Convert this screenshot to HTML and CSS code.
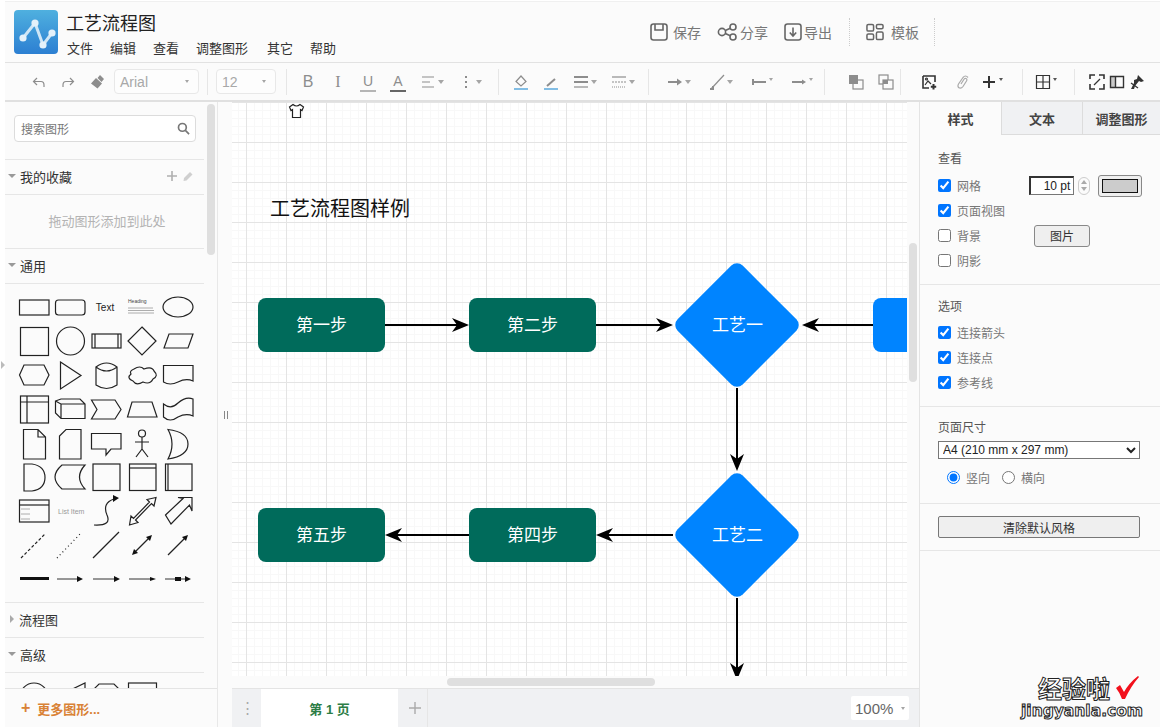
FILE: index.html
```html
<!DOCTYPE html>
<html lang="zh-CN">
<head>
    <meta charset="UTF-8">
    <title>工艺流程图</title>
    <link rel="stylesheet" href="styles.css">
</head>
<body>

<i class="collapse-tri"></i>

<div class="app">

    <!-- Top header -->
    <header class="header">
        <div class="brand">
            <svg class="logo" viewBox="0 0 44 44">
                <defs>
                    <linearGradient id="logoFill" x1="0" y1="0" x2="0" y2="1">
                        <stop offset="0" stop-color="#4fb0df"/>
                        <stop offset="1" stop-color="#2c7fd2"/>
                    </linearGradient>
                </defs>
                <rect width="44" height="44" rx="4" fill="url(#logoFill)"/>
                <path d="M9 28 L21 13 L29 35 L38 23" fill="none" stroke="#cfe6f6" stroke-width="3"/>
                <circle cx="9" cy="28" r="3.6" fill="#e4f1fa"/>
                <circle cx="21" cy="13" r="3.6" fill="#e4f1fa"/>
                <circle cx="29" cy="35" r="3.6" fill="#e4f1fa"/>
                <circle cx="38" cy="23" r="3.6" fill="#e4f1fa"/>
            </svg>
            <div>
                <div class="doc-title">工艺流程图</div>
                <nav class="menu">
                    <span>文件</span><span>编辑</span><span>查看</span><span class="menu-long">调整图形</span><span>其它</span><span>帮助</span>
                </nav>
            </div>
        </div>
        <div class="actions">
            <span class="action">
                <svg class="act-ico" viewBox="0 0 18 18"><rect x="1" y="1" width="16" height="16" rx="2.5"/><path d="M5 1 V7 H13 V1"/></svg>保存
            </span>
            <span class="action">
                <svg class="act-ico wide" viewBox="0 0 21 18"><circle cx="5" cy="9" r="3.6"/><circle cx="16" cy="4" r="3"/><circle cx="16" cy="14" r="3"/><path d="M8.3 7.5 L13.3 5.2 M8.3 10.5 L13.3 12.8"/></svg><span class="tight">分享</span>
            </span>
            <span class="action">
                <svg class="act-ico" viewBox="0 0 18 18"><rect x="1" y="1" width="16" height="16" rx="2.5"/><path d="M9 4.5 V12.5 M5.8 9.5 L9 13 L12.2 9.5"/></svg><span class="tight">导出</span>
            </span>
            <span class="dotted"></span>
            <span class="action action-last">
                <svg class="act-ico" viewBox="0 0 19 18"><rect x="1" y="1" width="7" height="7" rx="1.5"/><rect x="11" y="1" width="7" height="4.5" rx="1.5"/><rect x="1" y="11" width="7" height="6" rx="1.5"/><rect x="11" y="9" width="7" height="8" rx="1.5"/></svg>模板
            </span>
            <span class="dotted"></span>
        </div>
    </header>

    <!-- Format toolbar -->
    <div class="toolbar">
        <div class="group g-history">
            <svg class="ico" viewBox="0 0 16 16"><path d="M6 4 L2.5 7.5 L6 11 M3 7.5 H10 Q13 7.5 13 11 V13"/></svg>
            <svg class="ico" viewBox="0 0 16 16"><path d="M10 4 L13.5 7.5 L10 11 M13 7.5 H6 Q3 7.5 3 11 V13"/></svg>
            <svg class="ico" viewBox="0 0 16 16"><path class="solid" d="M7 4 L13 9.5 L8.5 14.5 L2 9.5 Z M8.5 4 L11 1 L15 5 L12.5 8 Z"/></svg>
        </div>
        <div class="combo combo-font">Arial<i class="caret small"></i></div>
        <span class="sep"></span>
        <div class="combo combo-size">12<i class="caret small"></i></div>
        <span class="sep"></span>
        <div class="group g-font">
            <span class="glyph">B</span>
            <span class="glyph serif">I</span>
            <span class="glyph under">U</span>
            <span class="glyph under dark">A</span>
            <span class="drop">
                <svg class="ico" viewBox="0 0 16 16"><path d="M2 3 H14 M2 8 H10 M2 13 H14"/></svg><i class="caret"></i>
            </span>
            <span class="drop">
                <svg class="ico" viewBox="0 0 16 16"><path class="solid" d="M7 2 H9 V4 H7 Z M7 7 H9 V9 H7 Z M7 12 H9 V14 H7 Z"/></svg><i class="caret"></i>
            </span>
        </div>
        <span class="sep"></span>
        <div class="group g-paint">
            <svg class="ico" viewBox="0 0 16 16"><path d="M8 2 L13 7.5 L8 12 L3 7.5 Z"/><path class="blue" d="M1 15 H15"/></svg>
            <svg class="ico" viewBox="0 0 16 16"><path class="thick" d="M4 12 L12 5"/><path class="blue" d="M1 15 H15"/></svg>
            <span class="drop">
                <svg class="ico" viewBox="0 0 16 16"><path class="thick" d="M1 3 H15"/><path class="thick" d="M1 8 H15"/><path d="M1 13 H15"/></svg><i class="caret"></i>
            </span>
            <span class="drop">
                <svg class="ico" viewBox="0 0 16 16"><path d="M1 3 H15"/><path d="M1 8 H15" stroke-dasharray="2 1"/><path d="M1 13 H15" stroke-dasharray="1 1"/></svg><i class="caret"></i>
            </span>
        </div>
        <span class="sep"></span>
        <div class="group g-lines">
            <span class="drop">
                <svg class="ico" viewBox="0 0 16 16"><path class="thick" d="M1 8 H11"/><path class="solid" d="M10 4.5 L15 8 L10 11.5 Z"/></svg><i class="caret"></i>
            </span>
            <span class="drop">
                <svg class="ico" viewBox="0 0 16 16"><path d="M2 15 L15 1"/><path class="thick" d="M1 15 H4 V12"/></svg><i class="caret"></i>
            </span>
            <span class="drop">
                <svg class="ico" viewBox="0 0 16 16"><path class="thick" d="M2 8 H15 M2 5 V11"/></svg><i class="caret small"></i>
            </span>
            <span class="drop">
                <svg class="ico" viewBox="0 0 16 16"><path class="thick" d="M1 8 H12"/><path class="solid" d="M11 5.5 L15 8 L11 10.5 Z"/></svg><i class="caret small"></i>
            </span>
        </div>
        <span class="sep"></span>
        <div class="group g-order">
            <svg class="ico" viewBox="0 0 16 16"><rect class="box" x="5" y="6" width="10" height="9"/><rect class="solid" x="1" y="1" width="9" height="9"/></svg>
            <svg class="ico" viewBox="0 0 16 16"><rect class="box" x="1" y="1" width="9" height="9"/><rect class="box" x="5" y="6" width="10" height="9"/><rect class="solid" x="5" y="6" width="5" height="4"/></svg>
        </div>
        <span class="sep"></span>
        <div class="group g-insert">
            <svg class="ico dark" viewBox="0 0 16 16"><path d="M2 2 H14 V8 M2 2 V14 H8" stroke-width="1.6"/><path d="M4 11 L7 7 L10 10"/><circle cx="5.5" cy="5" r="1"/><path class="thick" d="M12.500 10 V15.500 M9.800 12.800 H15.200"/></svg>
            <svg class="ico clip" viewBox="0 0 16 16"><path d="M13 3.5 Q10.5 .5 8 3.5 L3.5 10 Q2 13 4.5 14 Q6.5 14.5 8 12.5 L11.5 7 Q12.5 5 11 4.5 Q9.5 4 8.5 6 L6 10"/></svg>
            <span class="drop">
                <svg class="ico dark" viewBox="0 0 16 16"><path class="thick" d="M8 2 V14 M2 8 H14"/></svg><i class="caret small dark"></i>
            </span>
        </div>
        <span class="sep"></span>
        <span class="drop t-table">
            <svg class="ico dark" viewBox="0 0 16 16"><path d="M1.5 1.5 H14.5 V14.5 H1.5 Z M8 1.5 V14.5 M1.5 8 H14.5"/></svg><i class="caret small dark"></i>
        </span>
        <span class="sep"></span>
        <div class="group g-view">
            <svg class="ico dark" viewBox="0 0 16 16"><path d="M1 5 V1 H6 M10 1 H15 V5 M15 10 V15 H10 M6 15 H1 V10" stroke-width="1.6"/><path d="M5 11 L11 5"/></svg>
            <svg class="ico dark" viewBox="0 0 16 16"><path d="M1.5 2.5 H14.5 V13.5 H1.5 Z M6.5 2.5 V13.5" stroke-width="1.4"/><path class="solid" d="M2 3 H6 V13 H2 Z" opacity=".25"/></svg>
            <svg class="ico dark" viewBox="0 0 16 16"><path class="solid" d="M9 1 L15 7 L12 8 L10 7 L6 12 L5 15 L2 15 L5 9 L5 6 L8 5 Z"/><path d="M2 9 L9 14" stroke-width="1.2"/></svg>
        </div>
    </div>

    <div class="main">

        <!-- Left shape sidebar -->
        <aside class="sidebar">
            <div class="sidebar-scroll">
                <div class="search-row">
                    <div class="search">
                        <span>搜索图形</span>
                        <svg class="search-ico" viewBox="0 0 14 14"><circle cx="5.8" cy="5.8" r="4.2"/><path d="M9 9 L13 13"/></svg>
                    </div>
                </div>
                <div class="side-head">
                    <i class="tri-down"></i>我的收藏
                    <span class="head-tools">
                        <svg class="tool-ico" viewBox="0 0 12 12"><path d="M6 1 V11 M1 6 H11"/></svg>
                        <svg class="tool-ico pencil" viewBox="0 0 12 12"><path d="M2 8 L8 2 L10.5 4.5 L4.5 10.5 L1.5 11 Z"/></svg>
                    </span>
                </div>
                <div class="side-hint">拖动图形添加到此处</div>
                <div class="side-head"><i class="tri-down"></i>通用</div>

                <svg class="shapes" viewBox="5 284 199 318">
                    <g class="s">
                        <rect x="19.5" y="300" width="29.5" height="15"/>
                        <rect x="55.5" y="300" width="29.5" height="15" rx="3"/>
                        <ellipse cx="178" cy="307" rx="15" ry="10"/>

                        <rect x="20.5" y="327.5" width="28" height="28"/>
                        <circle cx="70.5" cy="341" r="14"/>
                        <rect x="92" y="334" width="29" height="14"/>
                        <path d="M95 334 V348 M118 334 V348"/>
                        <path d="M142 327 L156 341 L142 355 L128 341 Z"/>
                        <path d="M164 348 L169 334 H193 L188 348 Z"/>

                        <path d="M24 365 H44 L49 375 L44 385 H24 L19.5 375 Z"/>
                        <path d="M60.5 362 L81 375.5 L60.5 389 Z"/>
                        <path d="M96 367 V385 Q106.500 392 117 385 V367 Q106.500 359 96 367 Q106.500 375 117 367"/>
                        <path d="M134 369 Q140 365 144 369 Q152 366 154 371 Q159 376 153 379 Q150 385 143 382 Q136 386 133 381 Q126 378 131 374 Q129 371 134 369 Z"/>
                        <path d="M163.500 365.500 H193 V381 Q186 378 178 382 Q170 386 163.500 382 Z"/>

                        <rect x="20.500" y="396" width="28" height="27"/>
                        <path d="M27 396 V423 M20.500 402 H48.500"/>
                        <path d="M55.500 401 L61 399 H80 L85 404 V418.500 H61 L55.500 413 Z M55.500 401 L61 404 V418.500 M61 404 H85"/>
                        <path d="M91.500 400 H115 L121 409.500 L115 419 H91.500 L97 409.500 Z"/>
                        <path d="M132 402 H152 L157 417 H127.500 Z"/>
                        <path d="M163.500 404 Q171 410 178 403 Q186 396 193 399 V416 Q186 413 178 417 Q170 423 163.500 417 Z"/>

                        <path d="M23.500 429.500 H38 L45.500 437 V459 H23.500 Z M38 429.500 V437 H45.500"/>
                        <path d="M66 429.500 H81 V459 H59.500 V436 Z"/>
                        <path d="M91.500 433.500 H121 V449 H111 L106 455 V449 H91.500 Z"/>
                        <circle cx="142" cy="433.500" r="3.500"/>
                        <path d="M142 437 V449 M135 442 H149 M142 449 L136 457 M142 449 L148 457"/>
                        <path d="M168 429.500 Q188 432 188 444 Q188 456 168 459 Q176 444 168 429.500 Z"/>

                        <path d="M24 464 H32 Q45 466 45 477.500 Q45 489 32 491 H24 Z"/>
                        <path d="M62 465 H85 Q74 477 85 489 H62 Q48 477 62 465 Z"/>
                        <rect x="93" y="464" width="27" height="26.500"/>
                        <rect x="129.500" y="464" width="26.500" height="26.500"/>
                        <path d="M129.500 468 H156"/>
                        <rect x="165.500" y="464" width="26.500" height="26.500"/>
                        <path d="M168 464 V490.500"/>

                        <rect x="19.500" y="500" width="29.500" height="22"/>
                        <path d="M19.500 505 H49"/>
                        <path d="M94 525 Q112 526 107 515 Q102 503 114 499"/>
                        <path d="M129.500 525 L131 516 L133.500 518.500 L149.500 502 L147 499.500 L156 497.500 L154 506 L151.500 503.500 L135.500 520 L138 522.500 Z"/>
                        <path d="M165.500 515 L183 498.500 L178 497.500 H192 V511 L189.500 505 L171 524 Z"/>

                        <path d="M21 558 L45 534" stroke-dasharray="3 2"/>
                        <path d="M57 558 L81 533" stroke-dasharray="1 3"/>
                        <path d="M93 558 L119 532"/>
                        <path d="M134 553 L150 537"/>
                        <path d="M168 555 L186 537"/>
                    </g>
                    <path class="f" d="M152 535 L146 537 L150 541 Z M132 555 L138 553 L134 549 Z M188 535 L182 537 L186 541 Z M119 498 L113 495 L113 502 Z"/>
                    <rect class="f" x="20" y="577" width="29" height="3"/>
                    <path class="hair" d="M57 579 H80 M93 579 H117 M129 579 H153 M165 579 H188"/>
                    <path class="f" d="M83 579 L77 576 V582 Z M120 579 L114 576 V582 Z M156 579 L150 577 V581 Z M191 579 L185 576 V582 Z"/>
                    <rect class="f" x="175" y="577" width="6" height="4"/>
                    <text class="shape-text" x="105" y="311">Text</text>
                    <text class="shape-tiny" x="128" y="303">Heading</text>
                    <path class="lines" d="M128 308 H153 M128 310.500 H154 M128 313 H154 M21 509 H30 M21 514 H30 M21 519 H30"/>
                    <text class="shape-list" x="58" y="514">List Item</text>
                </svg>

                <div class="side-head top-line"><i class="tri-right"></i>流程图</div>
                <div class="side-head"><i class="tri-down"></i>高级</div>
                <svg class="shapes-more" viewBox="5 673 199 15">
                    <g class="s">
                        <ellipse cx="34" cy="697" rx="14" ry="14"/>
                        <path d="M60 695 L85 683 V700"/>
                        <path d="M93 690 L99 684 H114 L120 690 V700"/>
                        <rect x="128.500" y="683" width="28" height="20"/>
                    </g>
                </svg>
            </div>
            <div class="scroll-thumb side-thumb"></div>
            <div class="side-foot"><span class="foot-plus">+</span>更多图形...</div>
        </aside>

        <div class="gutter">
            <i class="grip"></i>
        </div>

        <!-- Drawing area -->
        <section class="work">
            <div class="work-top">
                <div class="canvas">
                    <svg class="diagram" viewBox="232 102 675 574">
                        <path class="shirt" d="M293 104.500 L289.500 107 L291 110.500 L292.500 109.500 V117.500 H300.500 V109.500 L302 110.500 L303.500 107 L300 104.500 Q296.500 107.500 293 104.500 Z"/>
                        <text class="d-title" x="270" y="216">工艺流程图样例</text>

                        <rect class="step" x="258" y="298" width="127" height="54" rx="8"/>
                        <rect class="step" x="469" y="298" width="127" height="54" rx="8"/>
                        <rect class="step" x="258" y="508" width="127" height="54" rx="8"/>
                        <rect class="step" x="469" y="508" width="127" height="54" rx="8"/>
                        <rect class="gate" x="691" y="279" width="92" height="92" rx="8" transform="rotate(45 737 325)"/>
                        <rect class="gate" x="691" y="489" width="92" height="92" rx="8" transform="rotate(45 737 535)"/>
                        <rect class="gate" x="873" y="298" width="60" height="54" rx="8"/>

                        <text class="d-label" x="321.500" y="331">第一步</text>
                        <text class="d-label" x="532.500" y="331">第二步</text>
                        <text class="d-label" x="737.500" y="331">工艺一</text>
                        <text class="d-label" x="737.500" y="541">工艺二</text>
                        <text class="d-label" x="532.500" y="541">第四步</text>
                        <text class="d-label" x="321.500" y="541">第五步</text>

                        <path class="link" d="M385 325 H460 M596 325 H664 M873 325 H811 M737 388 V462 M673 535 H605 M469 535 H394 M737 598 V668"/>
                        <path class="head" d="M469 325 L452 318 L457 325 L452 332 Z"/>
                        <path class="head" d="M673 325 L656 318 L661 325 L656 332 Z"/>
                        <path class="head" d="M802 325 L819 318 L814 325 L819 332 Z"/>
                        <path class="head" d="M737 471 L730 454 L737 459 L744 454 Z"/>
                        <path class="head" d="M596 535 L613 528 L608 535 L613 542 Z"/>
                        <path class="head" d="M385 535 L402 528 L397 535 L402 542 Z"/>
                        <path class="head" d="M737 680 L730 663 L737 668 L744 663 Z"/>
                    </svg>
                </div>
                <div class="vtrack"><div class="scroll-thumb v-thumb"></div></div>
            </div>
            <div class="htrack"><div class="scroll-thumb h-thumb"></div></div>
            <div class="pagebar">
                <span class="page-menu">⋮</span>
                <span class="page-tab">第 1 页</span>
                <span class="page-add">
                    <svg viewBox="0 0 14 14"><path d="M7 1 V13 M1 7 H13"/></svg>
                </span>
                <span class="zoom-box">100%<i class="caret small"></i></span>
            </div>
        </section>

        <!-- Right format panel -->
        <aside class="panel">
            <div class="tabs">
                <span class="tab active">样式</span>
                <span class="tab">文本</span>
                <span class="tab">调整图形</span>
            </div>

            <div class="block block-view">
                <div class="block-title">查看</div>
                <label class="check">
                    <input type="checkbox" checked><span class="check-text">网格</span>
                    <span class="pt-input">10 pt</span>
                    <span class="spinner"><i class="up"></i><i class="down"></i></span>
                    <span class="color-btn"><i></i></span>
                </label>
                <label class="check"><input type="checkbox" checked><span class="check-text">页面视图</span></label>
                <label class="check">
                    <input type="checkbox"><span class="check-text">背景</span>
                    <button class="btn-image" type="button">图片</button>
                </label>
                <label class="check"><input type="checkbox"><span class="check-text">阴影</span></label>
            </div>

            <div class="block block-options">
                <div class="block-title">选项</div>
                <label class="check"><input type="checkbox" checked><span class="check-text">连接箭头</span></label>
                <label class="check"><input type="checkbox" checked><span class="check-text">连接点</span></label>
                <label class="check"><input type="checkbox" checked><span class="check-text">参考线</span></label>
            </div>

            <div class="block block-size">
                <div class="block-title">页面尺寸</div>
                <select class="size-select">
                    <option>A4 (210 mm x 297 mm)</option>
                </select>
                <div class="radios">
                    <label><input type="radio" name="orient" checked><span class="check-text">竖向</span></label>
                    <label><input type="radio" name="orient"><span class="check-text">横向</span></label>
                </div>
            </div>

            <div class="block block-reset">
                <button class="btn-reset" type="button">清除默认风格</button>
            </div>
        </aside>
    </div>
</div>

<!-- Site watermark -->
<div class="watermark">
    <div class="wm-top">经验啦
        <svg class="wm-check" viewBox="0 0 24 25"><path d="M1 13 L5 10 L9 17 Q14 8 23 1 L24 2 Q16 11 10 24 H7 Q5 18 1 13 Z"/></svg>
    </div>
    <div class="wm-site">jingyanla.com</div>
</div>

</body>
</html>
```

FILE: styles.css
```css
* {
    box-sizing: border-box;
}

html, body {
    height: 100%;
}

body {
    margin: 0;
    background-color: #fff;
    font-family: "Liberation Sans", "Noto Sans CJK SC", sans-serif;
    color: #333;
    overflow: hidden;
    position: relative;
}

.app {
    margin: 1px 0 0 5px;
    height: 726px;
    display: flex;
    flex-direction: column;
    background-color: #fbfbfb;
    border-top: 1px solid #f0f0f0;
}

.collapse-tri {
    position: absolute;
    left: 1px;
    top: 361px;
    width: 0;
    height: 0;
    border-left: 4px solid #bbb;
    border-top: 4px solid transparent;
    border-bottom: 4px solid transparent;
}

/* header */
.header {
    height: 61px;
    flex: none;
    display: flex;
    align-items: flex-start;
    border-bottom: 1px solid #e2e2e2;
}

.brand {
    width: 645px;
    flex: none;
    display: flex;
    gap: 9px;
    padding: 8px 0 0 9px;
}

.logo {
    width: 44px;
    height: 44px;
    flex: none;
}

.doc-title {
    font-size: 18px;
    line-height: 26px;
    margin: 1px 0 0 -1px;
    color: #222;
}

.menu {
    display: flex;
    gap: 17px;
    font-size: 13px;
    line-height: 20px;
    margin-top: 2px;
    color: #333;
}

.menu-long {
    margin-right: 2px;
}

.actions {
    display: flex;
    align-items: center;
    height: 28px;
    margin-top: 16px;
    font-size: 14px;
    color: #777;
}

.action {
    display: flex;
    align-items: center;
    gap: 5px;
    margin-right: 16px;
}

.action-last {
    gap: 7px;
    margin-right: 14px;
}

.tight {
    margin-left: -3px;
}

.act-ico {
    width: 18px;
    height: 18px;
    fill: none;
    stroke: #666;
    stroke-width: 1.6;
}

.act-ico.wide {
    width: 21px;
}

.dotted {
    width: 0;
    height: 28px;
    border-left: 1px dotted #ccc;
    margin: 0 16px 0 1px;
}

/* toolbar */
.toolbar {
    height: 39px;
    flex: none;
    display: flex;
    align-items: center;
    padding-left: 26px;
    border-bottom: 2px solid #e0e0e0;
}

.group {
    display: flex;
    align-items: center;
    gap: 14px;
}

.g-history {
    gap: 13px;
    margin-right: 9px;
}

.g-font {
    margin: 0 8px 0 4px;
}

.g-paint {
    margin: 0 5px;
}

.g-lines {
    gap: 18px;
    margin: 0 3px 0 9px;
}

.g-order {
    margin: 0 -2px 0 14px;
}

.g-insert {
    gap: 18px;
    margin: 0 11px;
}

.g-view {
    gap: 4px;
    margin-left: 5px;
}

.g-insert .drop {
    margin-left: -8px;
}

.t-table {
    margin: 0 9px 0 3px;
}

.ico {
    width: 16px;
    height: 16px;
    flex: none;
    fill: none;
    stroke: #8d8d8d;
    stroke-width: 1.2;
}

.ico.dark {
    stroke: #333;
}

.ico.clip {
    stroke: #aaa;
}

.ico .solid {
    fill: #8d8d8d;
    stroke: none;
}

.ico.dark .solid {
    fill: #333;
}

.ico .thick {
    stroke-width: 2;
}

.ico .blue {
    stroke: #5aa9dd;
    stroke-width: 1.5;
}

.ico .box {
    fill: #fbfbfb;
}

.sep {
    width: 1px;
    height: 26px;
    flex: none;
    background-color: #e6e6e6;
    margin: 0 9px 0 8px;
}

.combo {
    height: 25px;
    display: flex;
    align-items: center;
    justify-content: space-between;
    padding: 0 9px 0 5px;
    border: 1px solid #e8e8e8;
    border-radius: 4px;
    background-color: #fdfdfd;
    font-size: 14px;
    color: #a8a8a8;
}

.combo-font {
    width: 85px;
    flex: none;
}

.combo-size {
    width: 60px;
    flex: none;
    margin: 0 2px 0 -1px;
}

.glyph {
    width: 16px;
    text-align: center;
    font-size: 16px;
    line-height: 18px;
    color: #8d8d8d;
}

.glyph.serif {
    font-family: "Liberation Serif", serif;
}

.glyph.under {
    font-size: 14px;
    border-bottom: 2px solid #b5b5b5;
}

.glyph.dark {
    border-bottom-color: #666;
}

.drop {
    display: flex;
    align-items: center;
    gap: 2px;
}

.caret {
    width: 0;
    height: 0;
    flex: none;
    border-top: 4px solid #a5a5a5;
    border-left: 3.5px solid transparent;
    border-right: 3.5px solid transparent;
}

.caret.small {
    border-top-width: 3px;
    border-left-width: 2.5px;
    border-right-width: 2.5px;
    margin-bottom: 4px;
}

.combo .caret.small,
.zoom-box .caret.small {
    margin-bottom: 0;
}

.caret.dark {
    border-top-color: #555;
}

/* layout of the page below the toolbars */
.main {
    flex: 1;
    min-height: 0;
    display: flex;
}

/* sidebar */
.sidebar {
    width: 213px;
    flex: none;
    position: relative;
    display: flex;
    flex-direction: column;
    border-right: 1px solid #e8e8e8;
}

.sidebar-scroll {
    flex: 1;
    min-height: 0;
    overflow: hidden;
    width: 199px;
}

.search-row {
    height: 58px;
    padding: 13px 8px 0 9px;
    border-bottom: 1px solid #e6e6e6;
}

.search {
    width: 182px;
    height: 27px;
    display: flex;
    align-items: center;
    justify-content: space-between;
    padding: 0 5px 0 6px;
    background-color: #fff;
    border: 1px solid #dcdcdc;
    border-radius: 4px;
    font-size: 12px;
    color: #777;
}

.search-ico {
    width: 13px;
    height: 13px;
    fill: none;
    stroke: #777;
    stroke-width: 1.8;
}

.side-head {
    height: 35px;
    padding-bottom: 2px;
    display: flex;
    align-items: center;
    font-size: 13px;
    color: #333;
    border-bottom: 1px solid #e6e6e6;
}

.tri-down {
    width: 0;
    height: 0;
    margin: 0 4px 0 3px;
    border-top: 4px solid #999;
    border-left: 4px solid transparent;
    border-right: 4px solid transparent;
}

.tri-right {
    width: 0;
    height: 0;
    margin: 0 5px 0 5px;
    border-left: 4px solid #aaa;
    border-top: 4px solid transparent;
    border-bottom: 4px solid transparent;
}

.head-tools {
    margin-left: auto;
    display: flex;
    align-items: center;
    gap: 4px;
    padding-right: 10px;
}

.tool-ico {
    width: 12px;
    height: 12px;
    fill: none;
    stroke: #b0b0b0;
    stroke-width: 1.6;
}

.tool-ico.pencil {
    fill: #cfcfcf;
    stroke: none;
}

.side-hint {
    height: 54px;
    line-height: 54px;
    text-align: center;
    padding-left: 5px;
    font-size: 13px;
    color: #b3b3b3;
    border-bottom: 1px solid #e6e6e6;
}

.shapes,
.shapes-more {
    display: block;
    width: 199px;
}

.shapes {
    height: 318px;
}

.shapes-more {
    height: 15px;
}

.shapes .s,
.shapes-more .s {
    fill: none;
    stroke: #222;
    stroke-width: 1.2;
}

.shapes .f {
    fill: #111;
}

.shapes .hair {
    fill: none;
    stroke: #333;
    stroke-width: 1;
}

.shapes .lines {
    fill: none;
    stroke: #999;
    stroke-width: .8;
}

.shape-text {
    font-size: 10px;
    text-anchor: middle;
    fill: #222;
}

.shape-tiny {
    font-size: 5px;
    fill: #444;
}

.shape-list {
    font-size: 7px;
    fill: #999;
}

.top-line {
    height: 36px;
    border-top: 1px solid #e6e6e6;
}

.scroll-thumb {
    position: absolute;
    background-color: #dfdfdf;
    border-radius: 4px;
}

.side-thumb {
    left: 202px;
    top: 2px;
    width: 8px;
    height: 151px;
}

.side-foot {
    height: 39px;
    flex: none;
    display: flex;
    align-items: center;
    padding-left: 16px;
    background-color: #fbfbfb;
    border-top: 1px solid #e4e4e4;
    font-size: 13px;
    font-weight: bold;
    color: #d98236;
}

.foot-plus {
    font-size: 16px;
    margin-right: 7px;
}

.gutter {
    width: 14px;
    flex: none;
    display: flex;
    align-items: center;
    justify-content: center;
    padding-left: 1px;
}

.grip {
    width: 4px;
    height: 8px;
    border-left: 1px solid #888;
    border-right: 1px solid #888;
}

/* drawing area */
.work {
    width: 687px;
    flex: none;
    position: relative;
    display: flex;
    flex-direction: column;
}

.work-top {
    flex: 1;
    min-height: 0;
    display: flex;
}

.canvas {
    width: 675px;
    flex: none;
    overflow: hidden;
    background-color: #fff;
    background-image:
        linear-gradient(#e4e4e4 1px, transparent 1px),
        linear-gradient(90deg, #e4e4e4 1px, transparent 1px),
        linear-gradient(#f8f8f8 1px, transparent 1px),
        linear-gradient(90deg, #f8f8f8 1px, transparent 1px);
    background-size: 40px 40px, 40px 40px, 8px 8px, 8px 8px;
    background-position: 0 40px, 14px 0, 0 0, 6px 0;
}

.diagram {
    display: block;
    width: 675px;
    height: 574px;
}

.shirt {
    fill: #fff;
    stroke: #222;
    stroke-width: 1.2;
}

.d-title {
    font-size: 20px;
    fill: #111;
}

.step {
    fill: #006b5b;
}

.gate {
    fill: #0084ff;
}

.d-label {
    font-size: 17px;
    fill: #fff;
    text-anchor: middle;
}

.link {
    fill: none;
    stroke: #000;
    stroke-width: 2;
}

.head {
    fill: #000;
}

.vtrack {
    flex: 1;
    position: relative;
}

.v-thumb {
    left: 2px;
    top: 141px;
    width: 8px;
    height: 139px;
}

.htrack {
    height: 12px;
    flex: none;
    position: relative;
}

.h-thumb {
    left: 215px;
    top: 2px;
    width: 208px;
    height: 8px;
}

.pagebar {
    height: 39px;
    flex: none;
    display: flex;
    align-items: center;
    background-color: #f0f1f3;
    border-top: 1px solid #e4e4e4;
    font-size: 13px;
}

.page-menu {
    width: 29px;
    padding-left: 1px;
    text-align: center;
    color: #aaa;
    font-size: 15px;
}

.page-tab {
    width: 137px;
    height: 100%;
    display: flex;
    align-items: center;
    justify-content: center;
    background-color: #fff;
    font-weight: bold;
    color: #2c7d46;
}

.page-add {
    width: 30px;
    height: 100%;
    display: flex;
    align-items: center;
    justify-content: flex-end;
    padding-right: 5px;
    border-right: 1px solid #e6e6e6;
}

.page-add svg {
    width: 14px;
    height: 14px;
    fill: none;
    stroke: #aaa;
    stroke-width: 1.4;
}

.zoom-box {
    width: 58px;
    height: 24px;
    margin-left: 423px;
    display: flex;
    align-items: center;
    justify-content: space-between;
    padding: 0 4px;
    background-color: #fff;
    border-radius: 2px;
    font-size: 15px;
    color: #666;
}

/* right panel */
.panel {
    flex: 1;
    min-width: 0;
    border-left: 1px solid #e4e4e4;
}

.tabs {
    height: 33px;
    display: flex;
    font-size: 13px;
    font-weight: bold;
    color: #444;
}

.tab {
    width: 81px;
    display: flex;
    align-items: center;
    justify-content: center;
    background-color: #f0f1f3;
    border-bottom: 1px solid #dcdcdc;
    border-left: 1px solid #dcdcdc;
}

.tab.active {
    background-color: #fbfbfb;
    border-bottom: 0;
    border-left: 0;
}

.tab:last-child {
    flex: 1;
}

.block {
    padding: 0 18px;
    border-bottom: 1px solid #e6e6e6;
}

.block-view {
    height: 150px;
    padding-top: 16px;
}

.block-options {
    height: 122px;
    padding-top: 14px;
}

.block-size {
    height: 97px;
    padding-top: 13px;
}

.block-reset {
    height: 47px;
    padding-top: 12px;
}

.block-title {
    font-size: 12px;
    line-height: 16px;
    color: #555;
    margin-bottom: 6px;
}

.block-options .block-title {
    margin-bottom: 5px;
}

.block-size .block-title {
    margin-bottom: 7px;
}

.check {
    height: 25px;
    display: flex;
    align-items: center;
    font-size: 12px;
}

.check input,
.radios input {
    width: 13px;
    height: 13px;
    margin: 0 6px 0 0;
    flex: none;
}

.check-text {
    color: #777;
}

.block-view .check-text {
    width: 76px;
}

.pt-input {
    width: 47px;
    height: 19px;
    line-height: 16px;
    padding-right: 3px;
    text-align: right;
    background-color: #fff;
    border: 1px solid #777;
    border-top: 2px solid #333;
    border-left: 2px solid #333;
    font-size: 12px;
    color: #222;
}

.spinner {
    width: 12px;
    height: 18px;
    margin-left: 4px;
    display: flex;
    flex-direction: column;
    align-items: center;
    justify-content: center;
    gap: 3px;
    border: 1px solid #ccc;
    border-radius: 6px;
}

.up,
.down {
    width: 0;
    height: 0;
    border-left: 3.5px solid transparent;
    border-right: 3.5px solid transparent;
}

.up {
    border-bottom: 4px solid #aaa;
}

.down {
    border-top: 4px solid #aaa;
}

.color-btn {
    width: 46px;
    height: 22px;
    margin-left: 8px;
    padding: 3px;
    background-color: #efefef;
    border: 1px solid #888;
    border-radius: 3px;
}

.color-btn i {
    display: block;
    height: 100%;
    background-color: #ccc;
    border: 1px solid #111;
}

.btn-image {
    width: 56px;
    height: 22px;
    margin-left: 1px;
    padding: 0;
    background-color: #efefef;
    border: 1px solid #888;
    border-radius: 3px;
    font-family: inherit;
    font-size: 12px;
    color: #333;
}

.size-select {
    display: block;
    width: 202px;
    height: 18px;
    margin-top: -2px;
    padding: 0;
    background-color: #fff;
    border: 1px solid #777;
    border-radius: 0;
    font-family: inherit;
    font-size: 12px;
    color: #222;
}

.radios {
    display: flex;
    gap: 12px;
    margin: 10px 0 0 9px;
    font-size: 12px;
}

.radios label {
    display: flex;
    align-items: center;
}

.btn-reset {
    width: 202px;
    height: 22px;
    padding: 0;
    background-color: #efefef;
    border: 1px solid #777;
    border-radius: 2px;
    font-family: inherit;
    font-size: 12px;
    color: #333;
}

/* watermark over the corner */
.watermark {
    position: absolute;
    left: 1021px;
    top: 673px;
    width: 125px;
}

.wm-top {
    display: flex;
    align-items: center;
    height: 28px;
    padding-left: 17px;
    font-size: 24px;
    font-weight: bold;
    color: #fff;
    -webkit-text-stroke: 1px #222;
}

.wm-check {
    width: 24px;
    height: 25px;
    margin-left: 5px;
    fill: #f2101c;
}

.wm-site {
    font-family: "DejaVu Sans", sans-serif;
    font-size: 15.5px;
    font-weight: bold;
    line-height: 20px;
    color: #fff;
    -webkit-text-stroke: 1px #222;
    white-space: nowrap;
}
```
